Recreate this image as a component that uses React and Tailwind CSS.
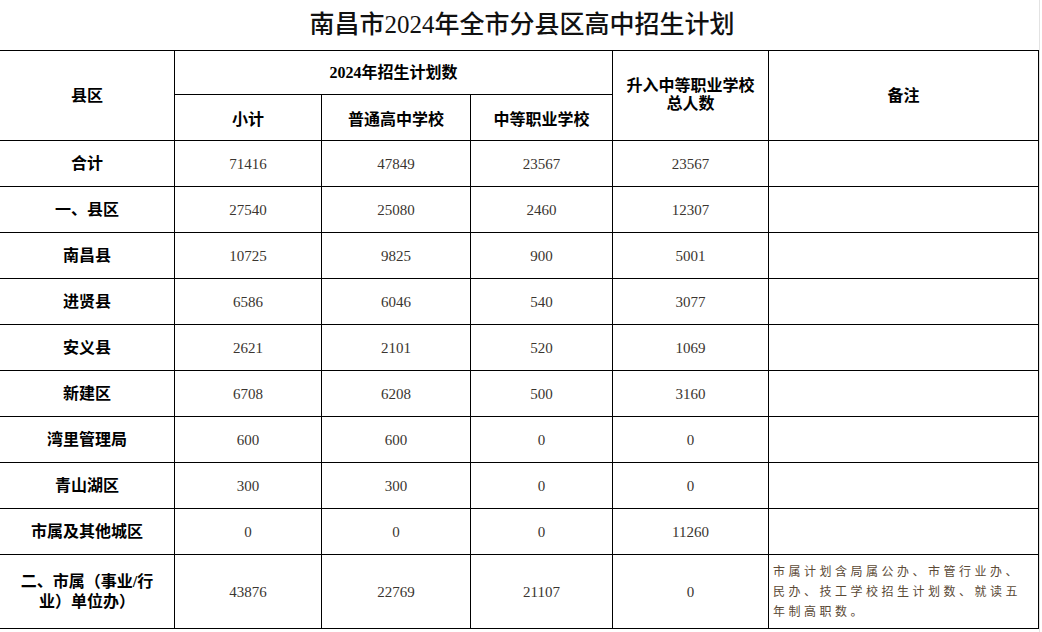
import React from "react";

const rows = [
  ["合计", "71416", "47849", "23567", "23567"],
  ["一、县区", "27540", "25080", "2460", "12307"],
  ["南昌县", "10725", "9825", "900", "5001"],
  ["进贤县", "6586", "6046", "540", "3077"],
  ["安义县", "2621", "2101", "520", "1069"],
  ["新建区", "6708", "6208", "500", "3160"],
  ["湾里管理局", "600", "600", "0", "0"],
  ["青山湖区", "300", "300", "0", "0"],
  ["市属及其他城区", "0", "0", "0", "11260"],
];

const font = { fontFamily: '"Liberation Serif", "Noto Sans CJK SC", serif' };

export default function App() {
  return (
    <div className="w-[1042px] h-[632px] bg-white overflow-hidden relative" style={font}>
      <div className="absolute right-0 top-0 bottom-0 w-[3px] border-l border-[#e3e3e3]" />
      <div className="h-[50px] flex items-center justify-center text-[25px] font-medium text-[#111] pl-[2px] pb-[1px]">
        南昌市2024年全市分县区高中招生计划
      </div>
      <table className="table-fixed border-collapse w-[1039px] -ml-px text-black">
        <colgroup>
          <col className="w-[175px]" />
          <col className="w-[147px]" />
          <col className="w-[149px]" />
          <col className="w-[142px]" />
          <col className="w-[156px]" />
          <col className="w-[270px]" />
        </colgroup>
        <thead className="text-[16px] font-bold">
          <tr className="h-[44px]">
            <th rowSpan={2} className="border border-black">县区</th>
            <th colSpan={3} className="border border-black">2024年招生计划数</th>
            <th rowSpan={2} className="border border-black leading-[18px] pb-[2px]">
              升入中等职业学校
              <br />
              总人数
            </th>
            <th rowSpan={2} className="border border-black">备注</th>
          </tr>
          <tr className="h-[46px]">
            <th className="border border-black pt-[4px]">小计</th>
            <th className="border border-black pt-[4px]">普通高中学校</th>
            <th className="border border-black pt-[4px]">中等职业学校</th>
          </tr>
        </thead>
        <tbody>
          {rows.map((r) => (
            <tr key={r[0]} className="h-[46px]">
              <td className="border border-black text-center text-[16px] font-bold pt-[1px]">{r[0]}</td>
              {r.slice(1).map((v, i) => (
                <td key={i} className="border border-black text-center text-[15px] text-[#3a3530] pt-[2px]">
                  {v}
                </td>
              ))}
              <td className="border border-black" />
            </tr>
          ))}
          <tr className="h-[74px]">
            <td className="border border-black text-center text-[16px] font-bold leading-[20px]">
              二、市属（事业/行
              <br />
              业）单位办）
            </td>
            <td className="border border-black text-center text-[15px] text-[#3a3530] pt-[2px]">43876</td>
            <td className="border border-black text-center text-[15px] text-[#3a3530] pt-[2px]">22769</td>
            <td className="border border-black text-center text-[15px] text-[#3a3530] pt-[2px]">21107</td>
            <td className="border border-black text-center text-[15px] text-[#3a3530] pt-[2px]">0</td>
            <td className="border border-black pl-[4px] text-[12px] leading-[20px] tracking-[3.5px] text-[#5b4a36]">
              市属计划含局属公办、市管行业办、
              <br />
              民办、技工学校招生计划数、就读五
              <br />
              年制高职数。
            </td>
          </tr>
        </tbody>
      </table>
    </div>
  );
}
